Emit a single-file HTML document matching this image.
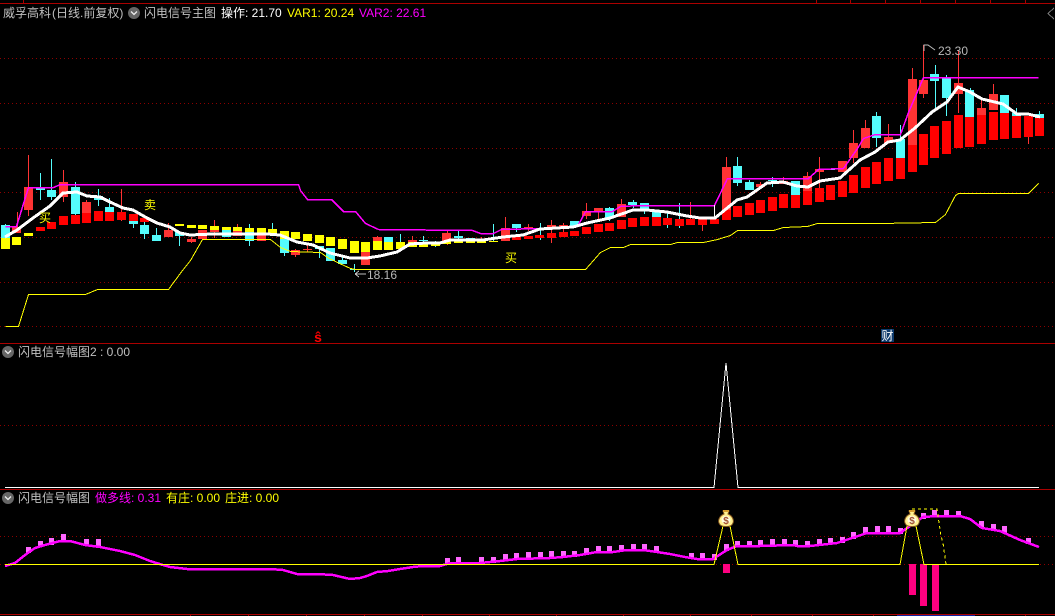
<!DOCTYPE html>
<html><head><meta charset="utf-8"><title>闪电信号</title>
<style>
html,body{margin:0;padding:0;background:#000;width:1055px;height:616px;overflow:hidden}
svg{display:block}
text{font-family:"Liberation Sans","WenQuanYi Zen Hei","Noto Sans CJK SC",sans-serif;font-size:12px;-webkit-font-smoothing:none}
.l{fill:none;stroke-linejoin:miter}
</style></head><body>
<svg width="1055" height="616" viewBox="0 0 1055 616" xmlns="http://www.w3.org/2000/svg">
<rect width="1055" height="616" fill="#000"/>
<g shape-rendering="crispEdges">
<!-- dotted grid -->
<g stroke="#8c0000" stroke-width="1" stroke-dasharray="1 3" fill="none">
<path d="M0 58.5H1055M0 103.5H1055M0 148.5H1055M0 192.5H1055M0 237.5H1055M0 282.5H1055M0 326.5H1055M0 425.5H1055M0 536.5H1055M0 564.5H1055"/>
</g>
<!-- solid frame -->
<g stroke="#aa0000" stroke-width="1" fill="none">
<path d="M0 3.5H1055M0 343.5H1055M0 489.5H1055M0 614.5H1055"/>
<path d="M23.5 0V3M816.5 0V3M850.5 0V3M885.5 0V3M920.5 0V3M955.5 0V3M990.5 0V3M1025.5 0V3"/>
<path d="M190.5 614V616M248.5 614V616M306.5 614V616M364.5 614V616M422.5 614V616M489.5 614V616M556.5 614V616M623.5 614V616M690.5 614V616M751.5 614V616M812.5 614V616M873.5 614V616M1025.5 614V616"/>
</g>
<path d="M897 615.5H975" stroke="#1020a0" fill="none"/>
<path d="M1054 8L1048 13.5L1054 19" stroke="#777" fill="none"/>

<!-- red wicks -->
<path stroke="#ff3333" fill="none" d="M17.5 212V227M28.5 155V216M63.5 170V202M86.5 200V202M121.5 189V221M168.5 223V230M191.5 237V243M214.5 220V238M237.5 224V231M295.5 249V257M307.5 245V252M377.5 236V237M412.5 236V240M447.5 231V245M481.5 237V243M505.5 217V228M528.5 224V231M551.5 220V243M563.5 223V232M586.5 203V219M598.5 208V219M621.5 199V204M690.5 202V219M702.5 217V231M726.5 157V220M760.5 182V184M783.5 177V181M807.5 172V176M819.5 157V188M853.5 130V163M865.5 120V128M888.5 124V137M912.5 68V79M923.5 45V98M958.5 50V113M981.5 100V115M993.5 84V94M1028.5 116V144"/>
<!-- cyan wicks -->
<path stroke="#54fcfc" fill="none" d="M5.5 224V225M40.5 173V200M51.5 159V200M75.5 182V215M98.5 189V206M109.5 198V207M133.5 221V228M144.5 222V239M156.5 228V235M179.5 232V246M249.5 224V246M272.5 223V229M284.5 239V256M319.5 246V258M342.5 255V264M354.5 264V272M400.5 234V242M423.5 236V243M435.5 241V247M458.5 231V240M493.5 224V241M516.5 224V232M540.5 223V240M609.5 207V221M633.5 200V208M644.5 203V214M667.5 212V228M679.5 203V228M737.5 157V186M749.5 180V182M772.5 177V187M876.5 112V147M900.5 125V139M935.5 65V108M946.5 75V116M970.5 88V90M1016.5 108V113M1039.5 111V114"/>

<!-- cyan bodies -->
<path fill="#54fcfc" d="M1 225h9V238h-9zM36 187h9V190h-9zM47 190h9V197h-9zM71 187h9V214h-9zM94 196h9V200h-9zM105 207h9V212h-9zM129 221h9V224h-9zM140 225h9V234h-9zM152 235h9V241h-9zM175 232h9V236h-9zM222 230h9V237h-9zM245 232h9V241h-9zM280 239h9V253h-9zM315 246h9V249h-9zM326 248h9V261h-9zM338 260h9V264h-9zM350 269h9V270h-9zM384 237h9V242h-9zM419 240h9V241h-9zM431 242h9V243h-9zM454 236h9V238h-9zM466 238h9V240h-9zM489 241h9V242h-9zM512 224h9V228h-9zM535 228h9V229h-9zM570 221h9V226h-9zM605 208h9V218h-9zM628 202h9V205h-9zM640 203h9V211h-9zM652 212h9V217h-9zM733 166h9V183h-9zM745 182h9V190h-9zM768 180h9V181h-9zM791 181h9V195h-9zM826 169h9V170h-9zM872 116h9V138h-9zM896 139h9V158h-9zM930 74h9V81h-9zM942 78h9V98h-9zM965 90h9V117h-9zM1000 95h9V113h-9zM1012 113h9V116h-9zM1035 114h9V118h-9z"/>
<!-- light red bodies -->
<path fill="#ff3333" d="M12 227h9V233h-9zM24 187h9V210h-9zM59 182h9V197h-9zM82 202h9V213h-9zM164 230h9V237h-9zM187 239h9V242h-9zM198 230h9V239h-9zM210 230h9V232h-9zM233 231h9V236h-9zM257 233h9V241h-9zM291 250h9V255h-9zM303 249h9V250h-9zM361 252h9V265h-9zM373 237h9V241h-9zM408 240h9V242h-9zM442 233h9V241h-9zM501 228h9V241h-9zM524 227h9V229h-9zM547 225h9V228h-9zM559 225h9V228h-9zM582 211h9V216h-9zM594 208h9V211h-9zM617 204h9V217h-9zM722 167h9V210h-9zM756 184h9V187h-9zM779 181h9V184h-9zM803 176h9V191h-9zM815 169h9V172h-9zM838 161h9V172h-9zM849 143h9V158h-9zM861 128h9V148h-9zM884 137h9V143h-9zM908 79h9V145h-9zM919 80h9V94h-9zM954 83h9V94h-9zM977 108h9V115h-9zM989 94h9V110h-9z"/>
<!-- solid red -->
<path fill="#ff0000" d="M36 227h9V231h-9zM47 222h9V229h-9zM59 216h9V225h-9zM71 215h9V224h-9zM82 213h9V223h-9zM94 211h9V221h-9zM105 212h9V221h-9zM117 212h9V220h-9zM129 214h9V221h-9zM140 218h9V222h-9zM512 237h9V240h-9zM524 236h9V239h-9zM535 235h9V238h-9zM547 233h9V238h-9zM559 232h9V237h-9zM570 231h9V236h-9zM582 227h9V234h-9zM594 224h9V232h-9zM605 223h9V231h-9zM617 220h9V229h-9zM628 218h9V227h-9zM640 217h9V226h-9zM652 217h9V226h-9zM663 218h9V225h-9zM675 219h9V226h-9zM686 219h9V225h-9zM698 219h9V225h-9zM710 219h9V224h-9zM722 210h9V220h-9zM733 206h9V217h-9zM745 203h9V215h-9zM756 200h9V213h-9zM768 197h9V211h-9zM779 194h9V208h-9zM791 195h9V208h-9zM803 191h9V205h-9zM815 188h9V202h-9zM826 185h9V200h-9zM838 181h9V197h-9zM849 175h9V193h-9zM861 167h9V188h-9zM872 162h9V184h-9zM884 158h9V181h-9zM896 158h9V179h-9zM908 145h9V172h-9zM919 134h9V165h-9zM930 126h9V158h-9zM942 121h9V154h-9zM954 115h9V148h-9zM965 117h9V147h-9zM977 115h9V144h-9zM989 112h9V140h-9zM1000 113h9V139h-9zM1012 116h9V138h-9zM1024 116h9V137h-9zM1035 118h9V136h-9z"/>
<!-- solid yellow -->
<path fill="#ffff00" d="M1 238h9V249h-9zM12 237h9V245h-9zM24 233h9V236h-9zM175 224h9V226h-9zM187 225h9V228h-9zM198 225h9V229h-9zM210 226h9V230h-9zM222 227h9V230h-9zM233 227h9V231h-9zM245 228h9V232h-9zM257 228h9V233h-9zM268 229h9V233h-9zM280 231h9V239h-9zM291 232h9V239h-9zM303 234h9V241h-9zM315 235h9V243h-9zM326 237h9V246h-9zM338 239h9V249h-9zM350 241h9V253h-9zM361 242h9V252h-9zM373 241h9V250h-9zM384 242h9V250h-9zM396 242h9V249h-9zM408 242h9V247h-9zM419 243h9V247h-9zM431 243h9V246h-9zM442 241h9V244h-9zM454 240h9V243h-9zM466 240h9V243h-9zM477 240h9V243h-9zM489 241h9V242h-9z"/>

<!-- yellow support line -->
<polyline class="l" transform="translate(.5 .5)" stroke="#ffff00" stroke-width="1" points="5,326 18,326 28,294 85,294 97,289 168,289 182,270 190,260 202,239 270,239 280,247 290,251 320,252 327,257 337,262 350,268 355,269 585,269 593,260 600,252 610,247 623,247 630,244 670,244 677,242 703,242 717,239 730,235 737,230 773,230 783,227 807,226 817,223 880,223 935,222 945,214 955,195 958,193 1028,193 1038,183"/>
<!-- magenta line -->
<polyline class="l" transform="translate(.5 .5)" stroke="#ff00ff" stroke-width="1.5" points="5,226 16,226 28,187 53,187 60,184 298,184 300,190 307,199 331,199 343,211 355,211 365,223 378,229 472,230 480,233 493,233 501,229 540,228 577,226 583,215 585,211 612,211 620,206 640,205 714,205 727,178 808,178 818,169 843,168 857,148 863,138 875,134 900,134 908,112 923,77 1038,77"/>
<path d="M714.5 205V218" stroke="#fff" fill="none"/>
<!-- white MA -->
<polyline class="l" stroke="#ffffff" stroke-width="3" points="5,237 17,230 33,218 50,206 63,193 77,192 87,196 100,197 110,202 123,208 133,210 147,218 157,223 170,227 180,233 190,235 213,234 240,234 267,234 280,235 297,242 313,245 330,253 350,258 367,258 380,256 397,252 410,244 427,243 440,243 450,240 483,240 503,237 523,235 540,229 573,227 587,223 610,218 633,210 647,210 667,212 687,216 700,218 715,218 737,200 747,197 767,183 783,182 797,186 808,187 820,181 840,178 860,160 875,152 888,142 900,140 915,128 932,112 947,102 958,87 970,92 982,99 1003,104 1017,114 1028,114 1040,117"/>

<!-- pane 2 spike -->
<polyline class="l" stroke="#ffffff" stroke-width="1" points="5,487.5 714,487.5 726,363 738,487.5 1039,487.5"/>

<!-- pane 3 -->
<path fill="#ff66ff" d="M26 547h5V553h-5zM38 541h5V547h-5zM49 538h5V545h-5zM61 534h5V541h-5zM84 539h5V545h-5zM96 539h5V546h-5zM445 558h5V564h-5zM456 557h5V563h-5zM479 557h5V563h-5zM491 557h5V563h-5zM503 554h5V561h-5zM514 553h5V560h-5zM526 552h5V559h-5zM538 552h5V559h-5zM549 551h5V558h-5zM561 551h5V557h-5zM572 551h5V557h-5zM584 548h5V555h-5zM596 546h5V552h-5zM607 546h5V553h-5zM619 545h5V551h-5zM631 544h5V551h-5zM642 544h5V551h-5zM654 546h5V552h-5zM689 553h5V559h-5zM700 553h5V559h-5zM712 554h5V560h-5zM724 544h5V551h-5zM735 541h5V547h-5zM747 541h5V547h-5zM758 540h5V546h-5zM770 539h5V545h-5zM782 539h5V545h-5zM793 540h5V546h-5zM805 541h5V547h-5zM817 539h5V545h-5zM828 538h5V544h-5zM840 537h5V543h-5zM851 532h5V539h-5zM863 527h5V534h-5zM875 526h5V533h-5zM886 526h5V533h-5zM898 528h5V534h-5zM921 513h5V519h-5zM932 510h5V516h-5zM944 510h5V516h-5zM956 511h5V517h-5zM979 521h5V528h-5zM991 524h5V530h-5zM1002 526h5V533h-5zM1026 538h5V544h-5z"/>
<path fill="#ff0080" d="M723 564h7V573h-7zM909 564h7V595h-7zM920 564h7V606h-7zM932 564h7V611h-7z"/>
<polyline class="l" stroke="#ff00ff" stroke-width="2.500" points="5,566 15,563 25,555 35,548 45,545 60,541 70,541 85,545 100,547 120,551 135,555 150,561 163,565 170,567 187,569 270,569 283,570 297,574 317,574 333,575 350,579 360,578 367,576 377,572 388,571 400,569 413,567 423,566 440,566 450,563 480,563 500,561 517,559 550,558 563,557 580,555 597,552 613,552 627,550 643,550 657,552 670,554 685,557 697,559 713,559 727,550 737,546 760,546 793,545 797,546 810,546 837,543 867,533 900,533 913,524 923,517 937,516 960,516 970,519 982,528 1000,531 1020,540 1039,547"/>
<polyline class="l" stroke="#ffff00" stroke-width="1" points="5,564.5 714,564.5 723,526 730,526 738,564.5 900,564.5 907,526 916,526 924,564.5 1039,564.5"/>
<polyline class="l" stroke="#ffff00" stroke-width="1" stroke-dasharray="3 3" points="912,509 937,509 941,536 943,543 946,564"/>
</g>

<!-- annotation arrows -->
<path d="M355 274H366M355 274L359 271M355 274L359 277" stroke="#bbb" fill="none" stroke-width="1" shape-rendering="crispEdges"/>
<path d="M924 51V45H928L935 50" stroke="#bbb" fill="none" stroke-width="1"/>
<text x="938" y="55" fill="#b8b8b8">23.30</text>
<text x="367" y="279" fill="#b8b8b8">18.16</text>
<text x="39" y="222" fill="#ffff00">买</text>
<text x="144" y="209" fill="#ffff00">卖</text>
<text x="505" y="262" fill="#ffff00">买</text>

<!-- S marker and cai marker -->
<text x="318" y="342" fill="#ff0000" text-anchor="middle" style="font-size:14px;font-weight:bold">ŝ</text>
<rect x="881" y="329" width="13" height="13" fill="#0e3a6c"/>
<text x="881.5" y="340" fill="#ffffff">财</text>

<!-- money bags -->
<g>
<path d="M723 511L729 511L728 514C733 516 734 521 733 523C732 526 729 526.500 726 526.500C723 526.500 720 526 719 523C718 521 719 516 724 514Z" fill="#fff090" stroke="#8a5a20" stroke-width="1"/>
<ellipse cx="726" cy="520" rx="4.500" ry="4" fill="#fffde0"/>
<rect x="723" y="510" width="6" height="2" fill="#d8a030"/>
<text x="726" y="524" text-anchor="middle" fill="#a05030" style="font-size:10px;font-weight:bold">$</text>
</g>
<g>
<path d="M909 511L915 511L914 514C919 516 920 521 919 523C918 526 915 526.500 912 526.500C909 526.500 906 526 905 523C904 521 905 516 910 514Z" fill="#fff090" stroke="#8a5a20" stroke-width="1"/>
<ellipse cx="912" cy="520" rx="4.500" ry="4" fill="#fffde0"/>
<rect x="909" y="510" width="6" height="2" fill="#d8a030"/>
<text x="912" y="524" text-anchor="middle" fill="#a05030" style="font-size:10px;font-weight:bold">$</text>
</g>

<!-- title icons -->
<circle cx="134" cy="13" r="6" fill="#666"/>
<path d="M131 11.500L134 14.500L137 11.500" stroke="#eee" stroke-width="1.300" fill="none"/>
<circle cx="8" cy="352" r="6" fill="#666"/>
<path d="M5 350.500L8 353.500L11 350.500" stroke="#eee" stroke-width="1.300" fill="none"/>
<circle cx="8" cy="498" r="6" fill="#666"/>
<path d="M5 496.500L8 499.500L11 496.500" stroke="#eee" stroke-width="1.300" fill="none"/>

<!-- titles -->
<text x="3" y="17" fill="#c0c0c0">威孚高科</text>
<text x="52" y="17" fill="#c0c0c0">(日线.前复权)</text>
<text x="144" y="17" fill="#c0c0c0">闪电信号主图</text>
<text x="221" y="17" fill="#ffffff">操作: 21.70</text>
<text x="287" y="17" fill="#ffff00">VAR1: 20.24</text>
<text x="359" y="17" fill="#ff00ff">VAR2: 22.61</text>
<text x="18" y="356" fill="#c0c0c0">闪电信号幅图2 : 0.00</text>
<text x="18" y="502" fill="#c0c0c0">闪电信号幅图</text>
<text x="95" y="502" fill="#ff00ff">做多线: 0.31</text>
<text x="166" y="502" fill="#ffff00">有庄: 0.00</text>
<text x="225" y="502" fill="#ffff00">庄进: 0.00</text>
</svg>
</body></html>
